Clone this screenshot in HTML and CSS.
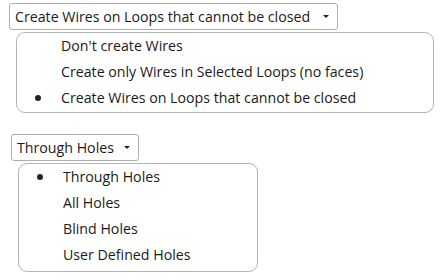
FILE: index.html
```html
<!DOCTYPE html>
<html lang="en">
<head>
<meta charset="UTF-8">
<title>Wire options</title>
<link rel="stylesheet" href="styles.css">
</head>
<body>
  <div class="group group-wires">
    <div class="combo combo-wires">
      <span class="combo-text">Create Wires on Loops that cannot be closed</span>
      <span class="caret"></span>
    </div>
    <ul class="menu menu-wires">
      <li>Don't create Wires</li>
      <li>Create only Wires in Selected Loops (no faces)</li>
      <li class="checked">Create Wires on Loops that cannot be closed</li>
    </ul>
  </div>

  <div class="group group-holes">
    <div class="combo combo-holes">
      <span class="combo-text">Through Holes</span>
      <span class="caret"></span>
    </div>
    <ul class="menu menu-holes">
      <li class="checked">Through Holes</li>
      <li>All Holes</li>
      <li>Blind Holes</li>
      <li>User Defined Holes</li>
    </ul>
  </div>
</body>
</html>
```

FILE: styles.css
```css
body{
  margin:0;
  background:#fff;
  color:#1a1a1a;
  font-family:"Open Sans", "Noto Sans", sans-serif;
  font-size:14.2px;
}
.group{
  display:flex;
  flex-direction:column;
  align-items:flex-start;
}
.group-wires{ padding:3px 0 0 9px; }
.group-holes{ padding:21px 0 0 11px; }
.combo{
  display:flex;
  align-items:center;
  box-sizing:border-box;
  height:27px;
  padding:0 8px 0 5px;
  border:1px solid #adadad;
  border-radius:3px;
}
.combo-wires{ width:329px; }
.combo-holes{ width:128px; }
.combo-text{ flex:1; white-space:nowrap; }
.caret{
  width:0;
  height:0;
  border-left:3px solid transparent;
  border-right:3px solid transparent;
  border-top:3px solid #222;
}
.menu{
  list-style:none;
  margin:2px 0 0 7px;
  padding:0;
  box-sizing:border-box;
  border:1px solid #b4b4b4;
  border-radius:9px;
}
.menu-wires{ width:418px; padding:0 0 1px; }
.menu-holes{ width:240px; padding:0 0 3px; }
.menu li{
  position:relative;
  height:26px;
  line-height:25px;
  padding-left:44px;
  white-space:nowrap;
}
.menu li.checked::before{
  content:"";
  position:absolute;
  left:18px;
  top:10px;
  width:6px;
  height:6px;
  border-radius:50%;
  background:#222;
}
```
